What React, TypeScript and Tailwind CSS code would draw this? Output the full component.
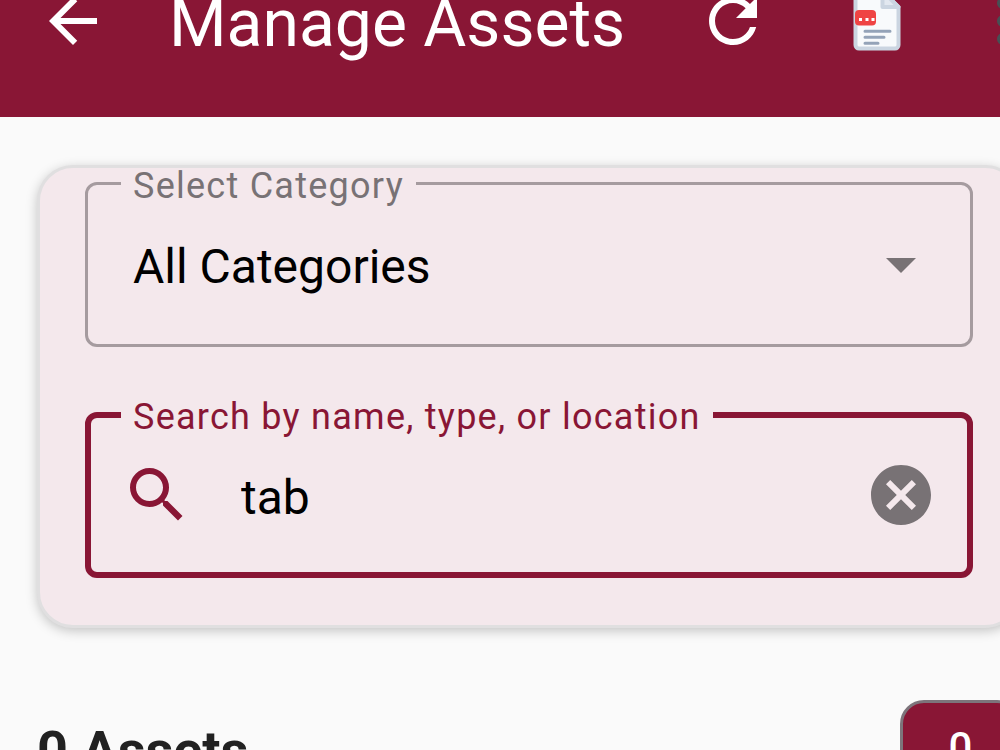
import { useState } from 'react'
import type { ReactNode } from 'react'
import { MdArrowBack, MdArrowDropDown, MdCancel, MdMoreVert, MdRefresh, MdSearch } from 'react-icons/md'

const CATEGORIES = ['All Categories', 'Electronics', 'Furniture', 'Vehicles']

function LogIcon() {
  return (
    <svg viewBox="0 0 72 72" className="size-[72px]" aria-hidden="true">
      <path d="M18 8H43.5L57.5 22V60a3.5 3.5 0 0 1-3.5 3.5H18a3.5 3.5 0 0 1-3.5-3.5V11.5A3.5 3.5 0 0 1 18 8Z"
        fill="#f8fafc" stroke="#cbd5e1" strokeWidth="4" />
      <path d="M41.5 8V22H57.5L43.5 8Z" fill="#e2e8f0" stroke="#cbd5e1" strokeWidth="4" strokeLinejoin="round" />
      <rect x="14" y="25" width="21" height="15.5" rx="4" fill="#ef4444" />
      <path d="M18 33h3v3h-3zM24.5 33h3v3h-3zM30.5 33h3v3h-3z" fill="#fff" />
      <path d="M24 46.3H49M24 52.3H43M24 58.3H37" stroke="#94a3b8" strokeWidth="3" strokeLinecap="round" />
    </svg>
  )
}

interface FieldProps {
  id: string
  label: string
  focused?: boolean
  children: ReactNode
}

// The legend cuts the notch into the outline
function OutlinedField({ id, label, focused, children }: FieldProps) {
  return (
    <fieldset className={focused
      ? 'min-w-0 rounded-xl border-6 border-[#891635] px-[30px] pb-[11px]'
      : 'min-w-0 rounded-xl border-3 border-[#a59b9f] px-[33px] pb-[14px]'}>
      <legend className={focused
        ? 'px-3 pt-1 text-[36px] leading-6 tracking-[0.035em] text-[#891635]'
        : 'px-3 pt-1.5 text-[36px] leading-6 tracking-[0.035em] text-[#787275]'}>
        <label htmlFor={id}>{label}</label>
      </legend>
      {children}
    </fieldset>
  )
}

export default function App() {
  const [category, setCategory] = useState(CATEGORIES[0])
  const [query, setQuery] = useState('tab')

  return (
    <div className="min-h-screen overflow-hidden bg-[#fafafa] font-['Roboto',sans-serif]">
      <div className="-mr-[57px]">
        <header className="-mt-[75px] flex h-48 items-center bg-[#891635] pl-[37px] text-white">
          <button type="button" aria-label="Back">
            <MdArrowBack className="size-[72px]" />
          </button>
          <h1 className="ml-[60px] flex-1 pt-1.5 text-[66px] leading-20 whitespace-nowrap">Manage Assets</h1>
          <button type="button" aria-label="Refresh" className="flex w-36 justify-center">
            <MdRefresh className="size-[72px]" />
          </button>
          <button type="button" aria-label="Log" className="flex w-36 justify-center">
            <LogIcon />
          </button>
          <button type="button" aria-label="More" className="flex w-[108px] justify-center text-[#475055]">
            <MdMoreVert className="size-[72px]" />
          </button>
        </header>

        <main className="pt-12 pr-9 pl-[37px]">
          <section className="flex flex-col gap-[54px] rounded-[36px] border-3 border-[#e0dfe0] bg-[#f4e8ec] px-[45px] pb-[47px] shadow-[0_3px_12px_rgba(0,0,0,0.22)]">
            <OutlinedField id="category" label="Select Category">
              <div className="grid h-[132px] items-center">
                <select id="category" value={category} onChange={e => setCategory(e.target.value)}
                  className="col-start-1 row-start-1 w-full appearance-none bg-transparent pt-1.5 pl-3 text-[48px] leading-[72px] text-black outline-none">
                  {CATEGORIES.map(c => <option key={c}>{c}</option>)}
                </select>
                <MdArrowDropDown className="pointer-events-none col-start-1 row-start-1 size-[72px] justify-self-end text-[#787275]" />
              </div>
            </OutlinedField>

            <OutlinedField id="search" label="Search by name, type, or location" focused>
              <div className="flex h-[132px] items-center">
                <MdSearch className="size-[72px] shrink-0 text-[#891635]" />
                <input id="search" type="text" value={query} onChange={e => setQuery(e.target.value)}
                  className="min-w-0 flex-1 bg-transparent pt-1.5 pl-12 text-[48px] leading-[72px] text-black outline-none" />
                <button type="button" aria-label="Clear" onClick={() => setQuery('')}>
                  <MdCancel className="size-[72px] text-[#787275]" />
                </button>
              </div>
            </OutlinedField>
          </section>

          <div className="mt-[72px] flex items-center justify-between">
            <h2 className="pt-1.5 text-[54px] leading-[72px] font-bold text-[#212121]">0 Assets</h2>
            <span className="flex h-24 w-[121px] items-center justify-center rounded-3xl border-3 border-[#7d747b] bg-[#891635] text-[42px] leading-[60px] font-medium text-white">
              0
            </span>
          </div>
        </main>
      </div>
    </div>
  )
}
